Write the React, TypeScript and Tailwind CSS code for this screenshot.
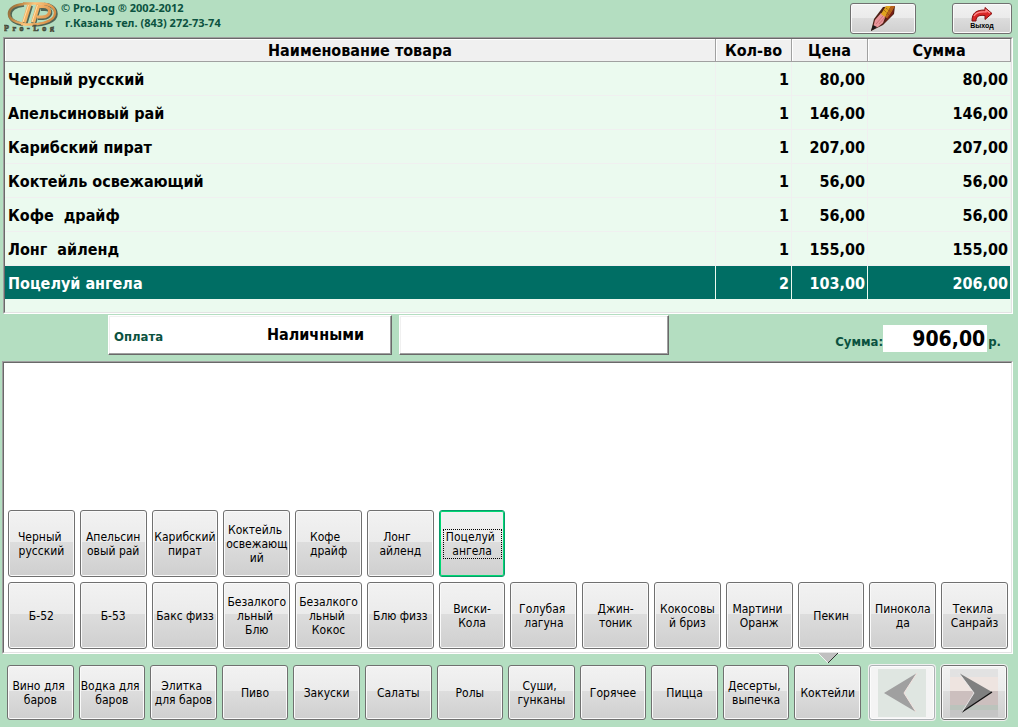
import React, { useState } from 'react';

type Item = { name: string; qty: number; price: string; total: string };

const items: Item[] = [
  { name: 'Черный русский', qty: 1, price: '80,00', total: '80,00' },
  { name: 'Апельсиновый рай', qty: 1, price: '146,00', total: '146,00' },
  { name: 'Карибский пират', qty: 1, price: '207,00', total: '207,00' },
  { name: 'Коктейль освежающий', qty: 1, price: '56,00', total: '56,00' },
  { name: 'Кофе  драйф', qty: 1, price: '56,00', total: '56,00' },
  { name: 'Лонг  айленд', qty: 1, price: '155,00', total: '155,00' },
  { name: 'Поцелуй ангела', qty: 2, price: '103,00', total: '206,00' },
];

const products = [
  'Черный \nрусский',
  'Апельсин\nовый рай',
  'Карибский\nпират',
  'Коктейль \nосвежающ\nий',
  'Кофе  \nдрайф',
  'Лонг  \nайленд',
  'Поцелуй \nангела',
];

const moreProducts = [
  'Б-52',
  'Б-53',
  'Бакс физз',
  'Безалкого\nльный \nБлю',
  'Безалкого\nльный \nКокос',
  'Блю физз',
  'Виски-\nКола',
  'Голубая \nлагуна',
  'Джин-\nтоник',
  'Кокосовы\nй бриз',
  'Мартини \nОранж',
  'Пекин',
  'Пинокола\nда',
  'Текила \nСанрайз',
];

const categories = [
  'Вино для \nбаров',
  'Водка для \nбаров',
  'Элитка \nдля баров',
  'Пиво',
  'Закуски',
  'Салаты',
  'Ролы',
  'Суши, \nгунканы',
  'Горячее',
  'Пицца',
  'Десерты, \nвыпечка',
  'Коктейли',
];

const face =
  'rounded-[3px] border border-[#707070] bg-[linear-gradient(#f2f2f2,#ebebeb_47%,#dddddd_47%,#cfcfcf)] shadow-[inset_0_0_0_1px_#fafafa]';

const raised =
  'border border-t-white border-l-white border-r-[#696969] border-b-[#696969] bg-white shadow-[inset_-1px_-1px_0_#a0a0a0,inset_1px_1px_0_#f0f0f0]';

const sunken =
  'border border-t-[#a0a0a0] border-l-[#a0a0a0] border-r-white border-b-white';

const sunkenInner =
  'border border-t-[#696969] border-l-[#696969] border-r-[#e3e3e3] border-b-[#e3e3e3]';

function Tile({
  text,
  selected = false,
  short = false,
  onClick,
}: {
  text: string;
  selected?: boolean;
  short?: boolean;
  onClick?: () => void;
}) {
  return (
    <button
      type="button"
      onClick={onClick}
      className={`flex min-w-0 items-center justify-center text-center text-[12px] leading-[14px] whitespace-pre text-black ${
        short ? 'h-[55px]' : 'h-[67px]'
      } ${
        selected
          ? 'rounded-[3px] border border-[#0a9a6a] bg-[linear-gradient(#f2f2f2,#ebebeb_47%,#dddddd_47%,#cfcfcf)] shadow-[inset_0_0_0_1px_#00d873]'
          : face
      }`}
    >
      {selected ? (
        <span className="w-[59px] border border-dotted border-black">{text}</span>
      ) : (
        text
      )}
    </button>
  );
}

function Logo() {
  return (
    <svg width="56" height="32" viewBox="0 0 56 32" role="img" aria-label="Pro-Log">
      <defs>
        <linearGradient id="gold" gradientUnits="userSpaceOnUse" x1="0" y1="0" x2="52" y2="26">
          <stop offset="0" stopColor="#5f5a42" />
          <stop offset="0.25" stopColor="#b5803f" />
          <stop offset="0.5" stopColor="#ffc47a" />
          <stop offset="1" stopColor="#c87a34" />
        </linearGradient>
      </defs>
      <g fill="none" stroke="#26332a" opacity="0.7">
        <path d="M20 5C11 6 6 10 6 15s6 8.500 13 9.500" strokeWidth="3.500" />
        <path d="M28 25c13 0 24-4 24-11S45 4.500 40 4.500" strokeWidth="3.500" />
        <path d="M26.500 5.500l-5.500 18M35 6l-5.500 18" strokeWidth="5" />
        <path d="M34 18h5c8 0 11-9 2-9h-4" strokeWidth="4" />
      </g>
      <g fill="none" stroke="url(#gold)">
        <path d="M20 4C10 5 5 9 5 14s6 8.500 14 9.500" strokeWidth="2.600" />
        <path d="M17 24c17 2 34-2 34-11 0-6-6-9.500-14-9.500H19" strokeWidth="2.400" />
        <path d="M33 17h5c9 0 11-10.500 1-10.500h-4" strokeWidth="3.200" />
      </g>
      <path d="M25.500 4.500l-5.500 18" stroke="#f2b163" strokeWidth="4.200" />
      <path d="M34.500 4.500l-5.500 18" stroke="#f2b163" strokeWidth="4.200" />
      <path d="M24.500 5l-5.500 17M33.500 5l-5.500 17" stroke="#ffdfa8" strokeWidth="1" />
      <text
        x="0"
        y="30.500"
        fontFamily="Liberation Serif, serif"
        fontWeight="700"
        fontSize="8"
        letterSpacing="3.600"
        fill="#866848"
        stroke="#3f4c3c"
        strokeWidth="0.700"
      >
        Pro-Log
      </text>
    </svg>
  );
}

function PencilIcon() {
  return (
    <svg width="26" height="26" viewBox="0 0 26 26" aria-hidden="true">
      <path d="M1 25L4 13 13 1 25 0 24 8 13 19z" fill="#4b2015" />
      <path d="M3 22L5 14 11 7 16 9 13 17 8 21z" fill="#e8949a" />
      <path d="M11 8L16 0 21 0 15 11z" fill="#e0a41e" />
      <path d="M15 11L21 0 25 0 18 13z" fill="#b8621c" />
      <path d="M15 15L24 3 23 8 14 17z" fill="#7a1e14" />
      <path d="M1 25L3 19 7 21z" fill="#181818" />
      <path d="M6 18l7-8M9 18l6-7" stroke="#c46a6e" strokeWidth="0.8" />
      <path d="M14 4l5 5M16 2l5 4" stroke="#8a4a10" strokeWidth="1" strokeDasharray="1 1" />
    </svg>
  );
}

function ExitIcon() {
  return (
    <svg width="22" height="15" viewBox="0 0 22 15" aria-hidden="true">
      <path
        d="M1 14C1 6 5 3 14 3V0.500l7 6-7 6V8.500C8 8 5 9 5 14z"
        fill="#d92626"
        stroke="#841010"
        strokeWidth="1"
      />
      <path d="M3 9C5 5 9 4.500 15 5V3l4 3" fill="none" stroke="#ff9090" strokeWidth="1.200" />
    </svg>
  );
}

export default function App() {
  const [product, setProduct] = useState(6);
  const [row, setRow] = useState(6);

  return (
    <div className="flex min-h-screen flex-col bg-[#b4dec1] font-['DejaVu_Sans_Condensed','DejaVu_Sans',sans-serif] text-black">
      <header className="flex h-[37px] shrink-0 items-start pr-[6px] pl-1">
        <Logo />
        <div className="pl-px text-[11px] leading-[15px] font-bold text-[#0b5240] font-['Noto_Sans',sans-serif]">
          <p>© Pro-Log ® 2002-2012</p>
          <p className="pl-1">г.Казань тел. (843) 272-73-74</p>
        </div>
        <div className="ml-auto flex gap-9 pt-[3px]">
          <button
            type="button"
            aria-label="Редактировать"
            className={`flex h-[31px] w-[66px] items-center justify-center ${face}`}
          >
            <PencilIcon />
          </button>
          <button
            type="button"
            className={`flex h-[31px] w-[60px] flex-col items-center justify-center ${face}`}
          >
            <ExitIcon />
            <span className="text-[7px] leading-[8px] font-bold font-['Liberation_Sans',sans-serif]">Выход</span>
          </button>
        </div>
      </header>

      <main className="flex flex-1 flex-col">
        <section className={`mr-[5px] ml-[3px] ${sunken}`}>
          <div className={`bg-[#ebfaef] pb-[12px] ${sunkenInner}`}>
            <table className="w-full table-fixed border-separate border-spacing-0 text-[16px] leading-5 font-bold">
              <colgroup>
                <col />
                <col className="w-[76px]" />
                <col className="w-[76px]" />
                <col className="w-[143px]" />
              </colgroup>
              <thead>
                <tr className="h-[23px] bg-[#f0f0f0]">
                  {['Наименование товара', 'Кол-во', 'Цена', 'Сумма'].map((h) => (
                    <th
                      key={h}
                      scope="col"
                      className="border-r border-b border-[#a0a0a0] px-0 pt-[2px] pb-0 text-center shadow-[inset_1px_1px_0_#ffffff]"
                    >
                      {h}
                    </th>
                  ))}
                </tr>
              </thead>
              <tbody>
                {items.map((it, i) => {
                  const cell = i === row ? 'border-[#ebfaef]' : 'border-[#f0f0f0]';
                  return (
                    <tr
                      key={it.name}
                      onClick={() => setRow(i)}
                      className={`h-[34px] ${i === row ? 'bg-[#006e64] text-white' : ''}`}
                    >
                      <td className={`border-r border-b pt-[2px] pr-0 pb-0 pl-[3px] whitespace-pre ${cell}`}>{it.name}</td>
                      <td className={`border-r border-b pt-[2px] pr-[2px] pb-0 pl-0 text-right ${cell}`}>{it.qty}</td>
                      <td className={`border-r border-b pt-[2px] pr-[2px] pb-0 pl-0 text-right ${cell}`}>{it.price}</td>
                      <td className={`border-r border-b pt-[2px] pr-[2px] pb-0 pl-0 text-right ${cell}`}>{it.total}</td>
                    </tr>
                  );
                })}
              </tbody>
            </table>
          </div>
        </section>

        <section className="flex h-[47px] shrink-0 items-start gap-[7px] pt-px pr-[17px] pl-[108px]">
          <div className={`flex h-10 w-[284px] items-center justify-between pr-[27px] pl-[5px] font-bold ${raised}`}>
            <span className="pt-1 text-[13px] leading-4 text-[#0b5240]">Оплата</span>
            <span className="text-[16px] leading-5">Наличными</span>
          </div>
          <input
            type="text"
            aria-label="Комментарий к оплате"
            className={`h-10 w-[270px] px-2 text-[16px] font-bold outline-none ${raised}`}
          />
          <div className="ml-auto flex items-center pt-[10px] font-bold text-[#0b5240]">
            <span className="pt-[6px] text-[13px] leading-4">Сумма:</span>
            <output className="block h-[27px] w-[104px] bg-white pr-[2px] text-right text-[21px] leading-[28px] text-black">
              906,00
            </output>
            <span className="pt-[6px] pl-px text-[13px] leading-4">р.</span>
          </div>
        </section>

        <section className={`relative mr-[5px] ml-[2px] flex flex-1 flex-col ${sunken}`}>
          <div className={`flex flex-1 flex-col justify-end gap-[5px] bg-white pt-4 pr-[3px] pb-[3px] pl-1 ${sunkenInner}`}>
            <div className="grid grid-cols-14 gap-x-[5px]">
              {products.map((p, i) => (
                <Tile key={p} text={p} selected={i === product} onClick={() => setProduct(i)} />
              ))}
            </div>
            <div className="grid grid-cols-14 gap-x-[5px]">
              {moreProducts.map((p) => (
                <Tile key={p} text={p} />
              ))}
            </div>
          </div>
          <svg
            className="absolute top-full right-[174px]"
            width="20"
            height="11"
            viewBox="0 0 20 11"
            aria-hidden="true"
          >
            <path d="M0 0h20L10 10z" fill="#c0c0c0" />
            <path d="M0 0l10 10" stroke="#ffffff" strokeWidth="0.8" />
            <path d="M20 0L10 10" stroke="#303030" strokeWidth="1" />
          </svg>
        </section>
      </main>

      <nav className="flex shrink-0 gap-2 pt-[11px] pr-[11px] pb-[7px] pl-[7px]" aria-label="Категории">
        <div className="grid flex-1 grid-cols-12 gap-x-[5px]">
          {categories.map((c) => (
            <Tile key={c} text={c} short />
          ))}
        </div>
        <div className="flex gap-[6px]">
          <button
            type="button"
            disabled
            aria-label="Назад"
            className="flex h-[55px] w-[66px] items-center justify-center rounded-[3px] border border-[#adb2b5] bg-[#f4f4f4] shadow-[inset_0_0_0_1px_#fcfcfc,0_0_0_1px_#f0f0f0]"
          >
            <svg width="48" height="48" viewBox="0 0 48 48" aria-hidden="true">
              <path d="M0 0h48v48H0z" fill="#dfe6e1" />
              <path d="M39 4L26 24l12 19L6 24z" fill="#a0a0a0" />
              <path d="M39 4L26 24l12 19" fill="none" stroke="#f3e3df" strokeWidth="1" />
            </svg>
          </button>
          <button
            type="button"
            aria-label="Вперёд"
            className={`flex h-[55px] w-[66px] items-center justify-center outline outline-[#f0f0f0] ${face}`}
          >
            <svg width="48" height="48" viewBox="0 0 48 48" aria-hidden="true">
              <path d="M0 0h48v8H0z" fill="#e2e2e2" />
              <path d="M0 8h48v14H0z" fill="#eee4e0" />
              <path d="M0 22h48v14H0z" fill="#ccbfbe" />
              <path d="M0 36h48v5H0z" fill="#bbc3bc" />
              <path d="M0 41h48v7H0z" fill="#c5c5c5" />
              <path d="M9 4l33 19-30 20 12-19z" fill="#808080" />
              <path d="M42 23L12 43" stroke="#111111" strokeWidth="1.3" />
              <path d="M12 43l12-19L9 4" fill="none" stroke="#f4f4f4" strokeWidth="0.8" />
            </svg>
          </button>
        </div>
      </nav>
    </div>
  );
}
